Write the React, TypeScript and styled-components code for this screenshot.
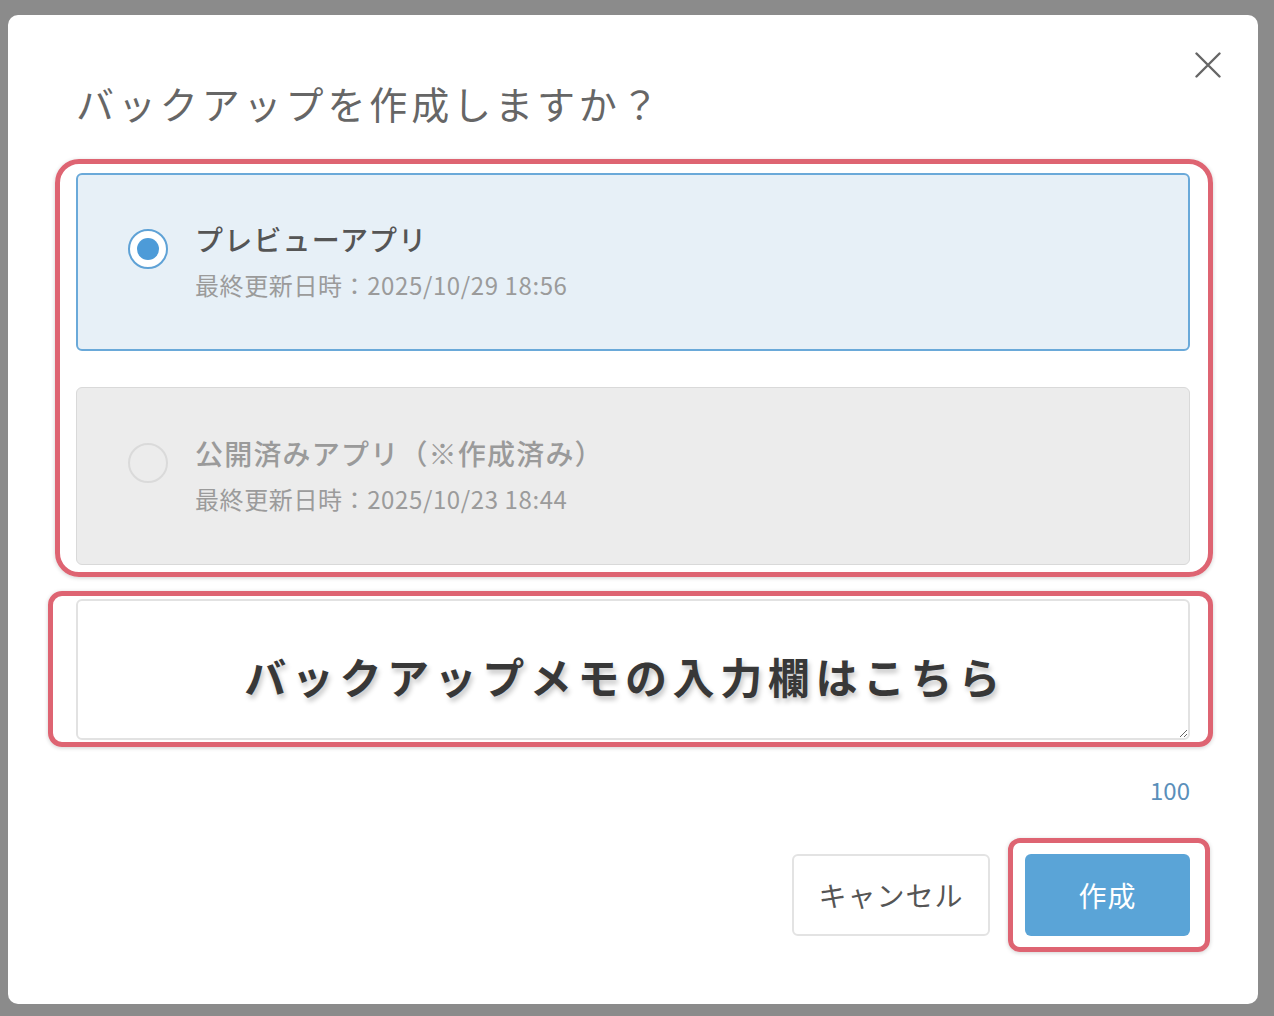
import React, {useState} from 'react';
import styled, {createGlobalStyle} from 'styled-components';

const GlobalStyle = createGlobalStyle`
  html, body {
    margin: 0;
    padding: 0;
    background: #8b8b8b;
  }
  body {
    font-family: "Noto Sans CJK JP", "Noto Sans", sans-serif;
  }
  * {
    box-sizing: border-box;
  }
`

const Backdrop = styled.div`
  width: 1274px;
  height: 1016px;
  background: #8b8b8b;
  padding: 15px 16px 12px 8px;
  display: flex;
`

const Dialog = styled.div`
  width: 1250px;
  height: 989px;
  background: #fff;
  border-radius: 10px;
  padding: 0 68px;
  display: flex;
  flex-direction: column;
`

const Header = styled.div`
  display: flex;
  justify-content: space-between;
  align-items: flex-start;
  padding-top: 37px;
  margin-right: -31px;
`

const Title = styled.h2`
  margin: 22px 0 0 0;
  font-size: 38px;
  line-height: 57px;
  font-weight: 400;
  letter-spacing: 3.9px;
  color: #666;
`

const CloseButton = styled.button`
  width: 26px;
  height: 26px;
  padding: 0;
  border: none;
  background: none;
  cursor: pointer;
  display: flex;
`

// red callout frame; margins let the frame sit around the content
// without shifting it
const Callout = styled.div<{$m: string; $p: string; $r?: number}>`
  border: 5px solid #de6472;
  border-radius: ${p => p.$r ?? 24}px;
  margin: ${p => p.$m};
  padding: ${p => p.$p};
  box-shadow: 0 1px 4px rgba(0, 0, 0, 0.18);
`

const OptionList = styled.div`
  display: flex;
  flex-direction: column;
  gap: 36px;
`

const Option = styled.label<{$selected: boolean; $disabled?: boolean}>`
  height: 178px;
  display: flex;
  align-items: flex-start;
  gap: 27px;
  padding: ${p => (p.$selected ? '44px 50px' : '45px 51px')};
  border-radius: 6px;
  border: ${p => (p.$selected ? '2px solid #6aa9d9' : '1px solid #d9d9d9')};
  background: ${p => (p.$selected ? '#e7f0f7' : '#ececec')};
  cursor: ${p => (p.$disabled ? 'default' : 'pointer')};
`

const Radio = styled.span<{$checked: boolean}>`
  flex: none;
  width: 40px;
  height: 40px;
  margin-top: 10px;
  border-radius: 50%;
  border: 2px solid ${p => (p.$checked ? '#5fa2d6' : '#dadada')};
  background: ${p => (p.$checked ? '#fff' : 'transparent')};
  display: flex;
  align-items: center;
  justify-content: center;

  &::after {
    content: '';
    width: 22px;
    height: 22px;
    border-radius: 50%;
    background: ${p => (p.$checked ? '#4d9bd8' : 'transparent')};
  }
`

const OptionText = styled.div`
  display: flex;
  flex-direction: column;
`

const OptionName = styled.div<{$muted?: boolean}>`
  font-size: 28px;
  line-height: 40px;
  font-weight: 500;
  letter-spacing: 1.2px;
  color: ${p => (p.$muted ? '#9a9a9a' : '#555')};
`

const Updated = styled.div`
  margin-top: 8px;
  font-size: 24px;
  line-height: 36px;
  letter-spacing: 0.6px;
  color: #9b9b9b;
`

const Memo = styled.textarea`
  display: block;
  width: 100%;
  height: 141px;
  resize: vertical;
  border: 2px solid #e2e2e2;
  border-radius: 6px;
  padding: 50px 16px 0 0;
  text-align: center;
  font-family: inherit;
  font-size: 42px;
  line-height: 50px;
  font-weight: 700;
  letter-spacing: 5.6px;
  outline: none;

  &::placeholder {
    color: #383838;
    opacity: 1;
    text-shadow: 2px 4px 5px rgba(0, 0, 0, 0.22);
  }
`

const Counter = styled.div`
  margin-top: 25px;
  text-align: right;
  font-size: 24px;
  line-height: 36px;
  color: #5a8fba;
`

const Footer = styled.div`
  margin-top: 46px;
  display: flex;
  justify-content: flex-end;
  align-items: center;
  gap: 18px;
`

const Button = styled.button<{$primary?: boolean}>`
  height: 82px;
  width: ${p => (p.$primary ? 165 : 198)}px;
  border-radius: 6px;
  border: ${p => (p.$primary ? 'none' : '2px solid #e3e3e3')};
  background: ${p => (p.$primary ? '#5aa4d7' : '#fff')};
  color: ${p => (p.$primary ? '#fff' : '#555')};
  font-family: inherit;
  font-size: 28px;
  letter-spacing: 1px;
  cursor: pointer;
`

type Target = 'preview' | 'published'

const options: {id: Target; name: string; updated: string; disabled?: boolean}[] = [
    {id: 'preview', name: 'プレビューアプリ', updated: '2025/10/29 18:56'},
    {id: 'published', name: '公開済みアプリ（※作成済み）', updated: '2025/10/23 18:44', disabled: true},
]

function App() {
    const [target, setTarget] = useState<Target>('preview')
    const [memo, setMemo] = useState('')

    return (
        <>
            <GlobalStyle/>
            <Backdrop>
                <Dialog>
                    <Header>
                        <Title>バックアップを作成しますか？</Title>
                        <CloseButton aria-label="close">
                            <svg width="26" height="26" viewBox="0 0 26 26">
                                <path d="M1.5 1.5 L24.5 24.5 M24.5 1.5 L1.5 24.5" stroke="#666" strokeWidth="2.4"
                                      strokeLinecap="round"/>
                            </svg>
                        </CloseButton>
                    </Header>

                    <Callout $m="28px -23px 0 -21px" $p="9px 18px 7px 16px">
                        <OptionList>
                            {options.map(o => (
                                <Option key={o.id}
                                        $selected={target === o.id}
                                        $disabled={o.disabled}
                                        onClick={() => !o.disabled && setTarget(o.id)}>
                                    <Radio $checked={target === o.id}/>
                                    <OptionText>
                                        <OptionName $muted={o.disabled}>{o.name}</OptionName>
                                        <Updated>最終更新日時：{o.updated}</Updated>
                                    </OptionText>
                                </Option>
                            ))}
                        </OptionList>
                    </Callout>

                    <Callout $m="14px -23px 0 -28px" $p="3px 18px 2px 23px" $r={14}>
                        <Memo value={memo}
                              maxLength={100}
                              onChange={e => setMemo(e.target.value)}
                              placeholder="バックアップメモの入力欄はこちら"/>
                    </Callout>
                    <Counter>{100 - memo.length}</Counter>

                    <Footer>
                        <Button>キャンセル</Button>
                        <Callout $m="-16px -20px -16px 0" $p="11px 15px 11px 12px" $r={12}>
                            <Button $primary>作成</Button>
                        </Callout>
                    </Footer>
                </Dialog>
            </Backdrop>
        </>
    );
}

export default App;
